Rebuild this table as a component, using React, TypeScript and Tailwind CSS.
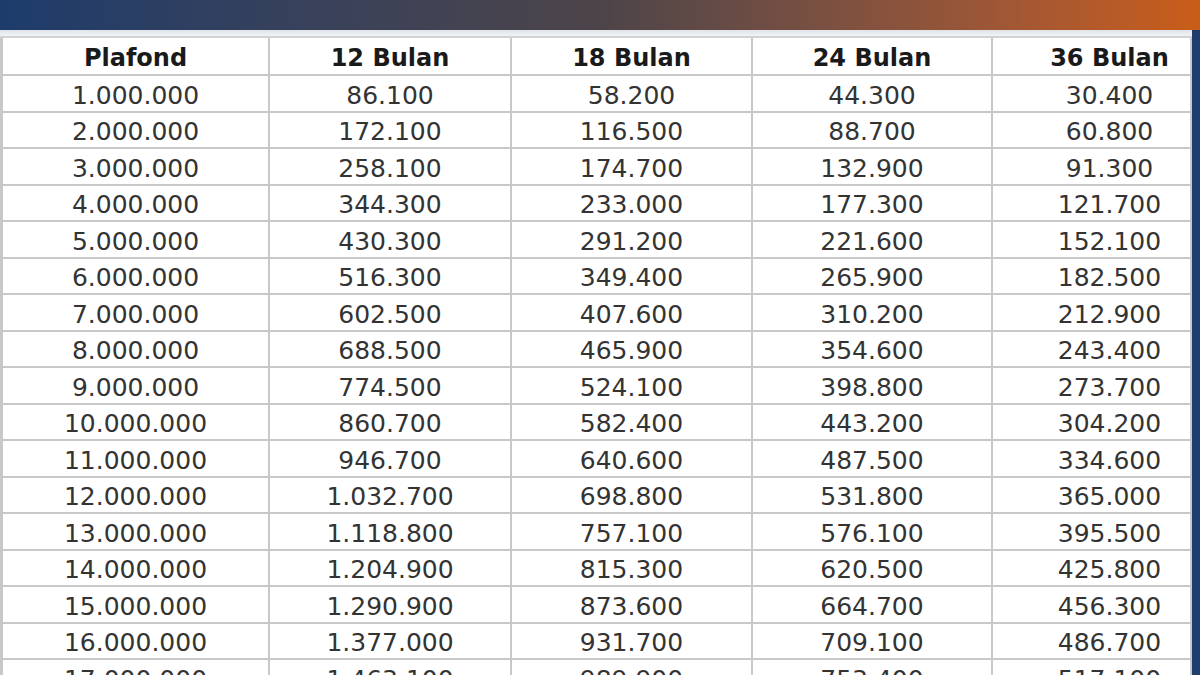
import React from 'react';

const rows: string[][] = [
  ['1.000.000', '86.100', '58.200', '44.300', '30.400'],
  ['2.000.000', '172.100', '116.500', '88.700', '60.800'],
  ['3.000.000', '258.100', '174.700', '132.900', '91.300'],
  ['4.000.000', '344.300', '233.000', '177.300', '121.700'],
  ['5.000.000', '430.300', '291.200', '221.600', '152.100'],
  ['6.000.000', '516.300', '349.400', '265.900', '182.500'],
  ['7.000.000', '602.500', '407.600', '310.200', '212.900'],
  ['8.000.000', '688.500', '465.900', '354.600', '243.400'],
  ['9.000.000', '774.500', '524.100', '398.800', '273.700'],
  ['10.000.000', '860.700', '582.400', '443.200', '304.200'],
  ['11.000.000', '946.700', '640.600', '487.500', '334.600'],
  ['12.000.000', '1.032.700', '698.800', '531.800', '365.000'],
  ['13.000.000', '1.118.800', '757.100', '576.100', '395.500'],
  ['14.000.000', '1.204.900', '815.300', '620.500', '425.800'],
  ['15.000.000', '1.290.900', '873.600', '664.700', '456.300'],
  ['16.000.000', '1.377.000', '931.700', '709.100', '486.700'],
  ['17.000.000', '1.463.100', '989.900', '753.400', '517.100'],
];

const headers = ['Plafond', '12 Bulan', '18 Bulan', '24 Bulan', '36 Bulan'];

// column widths, last column's content sits a bit to the right
const cols = [
  'w-[270px] border-l-[3px]',
  'w-[242px]',
  'w-[241px]',
  'w-[240px]',
  'w-[199px] pl-[36px]',
];

function Row({ cells, header }: { cells: string[]; header?: boolean }) {
  return (
    <div className={`flex shrink-0 ${header ? 'h-[38px]' : 'h-[36.5px]'}`}>
      {cells.map((c, i) => (
        <div
          key={i}
          className={`${cols[i]} flex items-center justify-center pt-[4px] border-b-2 border-r-2 border-[#c8c8c8] ${
            header ? 'text-[24px] font-bold text-[#1a1a1a]' : 'text-[25px] text-[#333333]'
          }`}
        >
          {c}
        </div>
      ))}
    </div>
  );
}

export default function App() {
  return (
    <div className="w-[1200px] h-[675px] overflow-hidden bg-white flex flex-col font-['DejaVu_Sans',sans-serif]">
      <div className="h-[30px] shrink-0 bg-linear-to-r from-[#1d3c6b] via-[#4d4449] to-[#c95d17]" />
      <div className="flex flex-1 min-h-0">
        <div className="flex flex-col flex-1 min-h-0">
          <div className="h-[8px] shrink-0 bg-linear-to-b from-[#dfe3e8] to-[#f2f4f6] border-b-2 border-[#d2d2d2]" />
          <Row cells={headers} header />
          {rows.map((r, i) => (
            <Row key={i} cells={r} />
          ))}
        </div>
        <div className="w-[8px] shrink-0 bg-[#1e3f6d]" />
      </div>
    </div>
  );
}
